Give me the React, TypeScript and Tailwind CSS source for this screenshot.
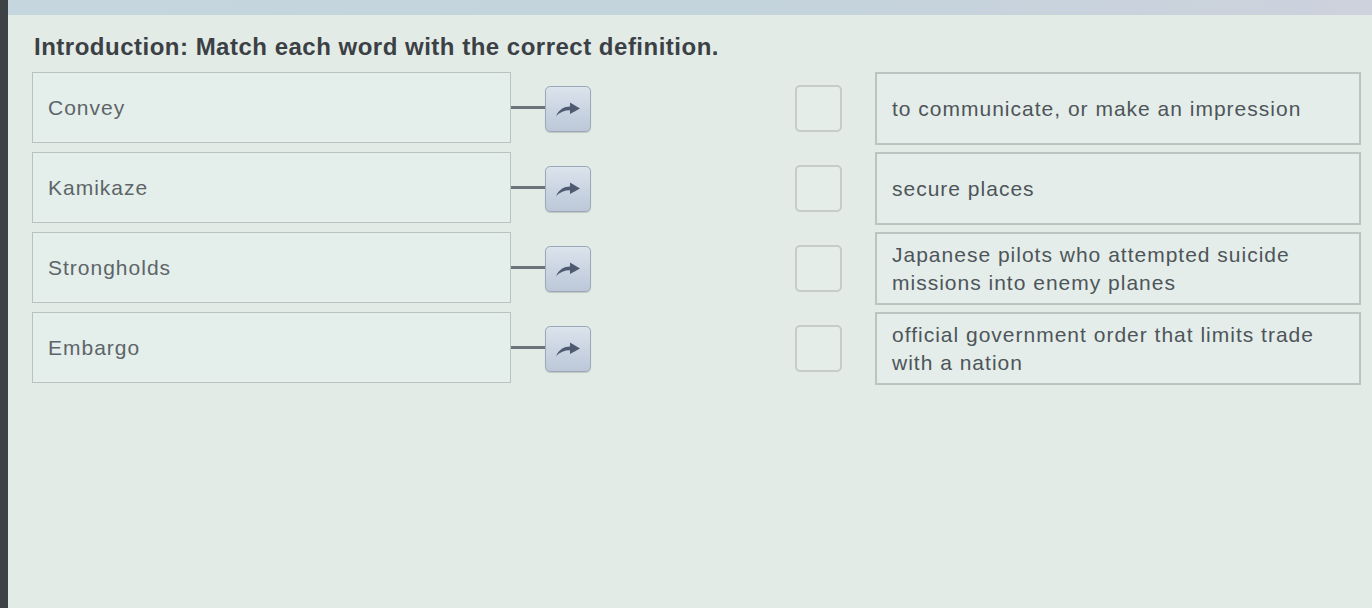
import React from "react";

const ROWS = [
  { word: "Convey", def: "to communicate, or make an impression" },
  { word: "Kamikaze", def: "secure places" },
  { word: "Strongholds", def: "Japanese pilots who attempted suicide missions into enemy planes" },
  { word: "Embargo", def: "official government order that limits trade with a nation" },
];

export default function App() {
  return (
    <div className="flex h-[608px] w-full overflow-hidden bg-[#e3ebe6] font-['Liberation_Sans',Arial,sans-serif]">
      <div className="w-2 shrink-0 bg-[#3d4245]" />
      <div className="flex flex-1 flex-col">
        <div className="h-[15px] bg-gradient-to-r from-[#c6d6df] via-[#c3d4dc] to-[#cdd2dd]" />
        <h1 className="mt-[18px] pl-[26px] text-[24px] font-bold leading-[28px] tracking-[0.5px] text-[#3b4045]">
          Introduction: Match each word with the correct definition.
        </h1>
        <div className="mt-[11px] flex flex-col gap-[7px] pl-[24px]">
          {ROWS.map((row) => (
            <Row key={row.word} word={row.word} def={row.def} />
          ))}
        </div>
      </div>
    </div>
  );
}

function CurvedArrow() {
  return (
    <svg width="26" height="16" viewBox="0 0 26 16" className="text-[#4f5a73]">
      <path
        d="M1 15 C4 8.5 9 5.5 15 5.5 L15 1.5 L25 7.5 L15 13 L15 9.2 C9.5 9.2 5 11 1 15 Z"
        fill="currentColor"
      />
    </svg>
  );
}

function Row({ word, def }: { word: string; def: string }) {
  return (
    <div className="flex h-[73px] items-center">
      <div className="flex h-[71px] w-[479px] items-center self-start border border-[#b9c2bf] bg-[#e4eeea] px-[15px] text-[21px] tracking-[1px] text-[#5d6569]">
        {word}
      </div>
      <div className="h-[3px] w-[34px] -translate-y-[1px] bg-[#6b7478]" />
      <button className="flex h-[46px] w-[46px] items-center justify-center rounded-[5px] border border-[#9ba8b7] bg-gradient-to-b from-[#dbe3ec] to-[#bcc8d9] shadow-[0_1px_1px_rgba(0,0,0,0.15)]">
        <CurvedArrow />
      </button>
      <div className="w-[204px]" />
      <div className="h-[47px] w-[47px] rounded-[5px] border-2 border-[#c5ccca] bg-[#e5ede9]" />
      <div className="w-[33px]" />
      <div className="flex h-[73px] w-[486px] items-center border-2 border-[#bcc4c1] bg-[#e4ede9] px-[15px] text-[21px] leading-[28px] tracking-[1px] text-[#4e555a]">
        <span>{def}</span>
      </div>
    </div>
  );
}
